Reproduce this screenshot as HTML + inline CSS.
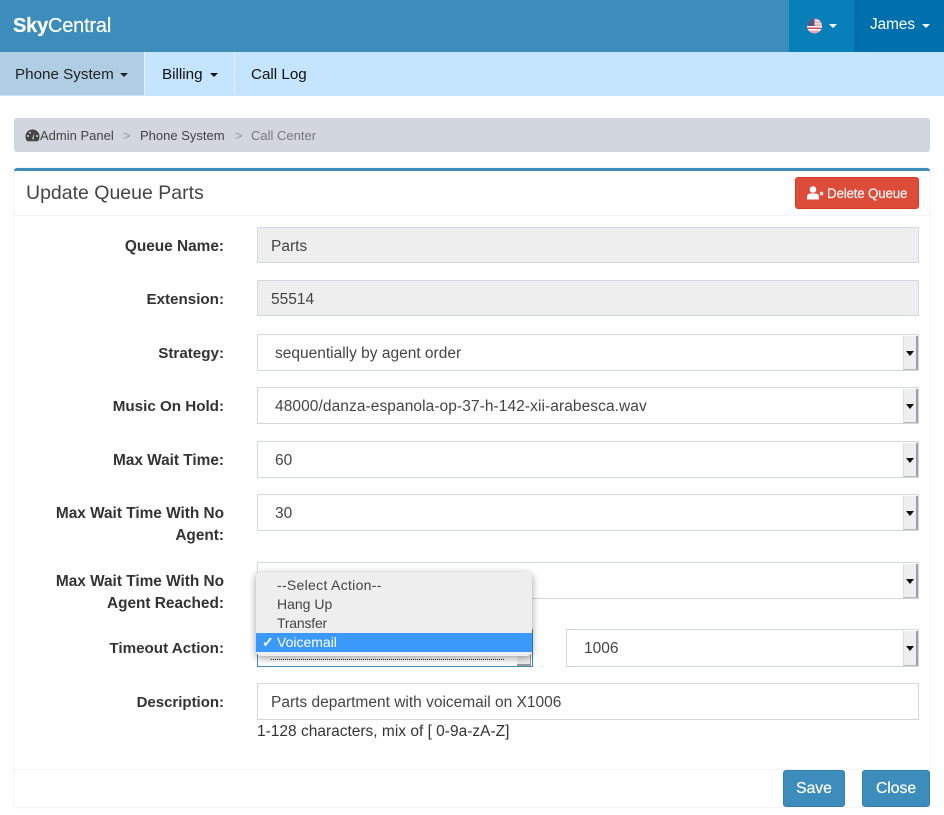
<!DOCTYPE html>
<html><head><meta charset="utf-8"><style>
*{box-sizing:border-box}
html,body{margin:0;padding:0;background:#fff}
body{width:944px;height:815px;position:relative;overflow:hidden;font-family:"Liberation Sans",sans-serif;font-size:14px;color:#444}
.a{position:absolute}
.t{position:absolute;white-space:nowrap;line-height:20px}
.caret{position:absolute;width:0;height:0;border-left:4px solid transparent;border-right:4px solid transparent;border-top:4px solid currentColor}
.lab{position:absolute;right:720px;font-weight:bold;color:#333;text-align:right;line-height:22px;font-size:15.4px;white-space:nowrap;letter-spacing:-.01px}
.f{position:absolute;border:1px solid #d2d6de;background:#fff;font-size:15.5px;color:#444;line-height:37px;padding-left:13px;left:257px;width:662px;height:37px;white-space:nowrap}
.f.dis{background:#eee;height:36px;padding-left:13px}
.s{padding-left:17px}
.arr{position:absolute;right:0;top:1px;bottom:0;width:15px;background:#eee;border-left:1px solid #ddd;border-right:2px solid #a0a0a0;border-bottom:1px solid #bbb}
.arr:after{content:"";position:absolute;left:2px;top:15px;border-left:4px solid transparent;border-right:4px solid transparent;border-top:5px solid #111}
.btn{position:absolute;background:#3c8dbc;border:1px solid #367fa9;border-radius:3px;color:#fff;text-align:center;font-size:15.7px;line-height:36px;-webkit-text-stroke:.2px #fff}
</style></head><body>
<div class="a" style="left:0;top:0;width:944px;height:52px;background:#3c8dbc"></div>
<div class="t" style="left:13px;top:15px;font-size:20px;line-height:22px;color:#fff;letter-spacing:-.2px;-webkit-text-stroke:.2px #fff"><b>Sky</b>Central</div>
<div class="a" style="left:789px;top:0;width:65px;height:52px;background:#0780ba"></div>
<div class="a" style="left:854px;top:0;width:90px;height:52px;background:#0070ac"></div>
<svg class="a" style="left:807px;top:18px" width="15" height="16" viewBox="0 0 15 16">
<defs><clipPath id="c"><circle cx="7.5" cy="8" r="7.5"/></clipPath></defs>
<g clip-path="url(#c)"><rect width="15" height="16" fill="#f0a5b0"/><rect y="2" width="15" height="1.5" fill="#f6dfe2"/><rect y="5" width="15" height="1.5" fill="#f6dfe2"/><rect y="8" width="15" height="1.5" fill="#fff"/><rect y="11" width="15" height="1.5" fill="#fff"/><rect y="9.5" width="15" height="1.5" fill="#d8475f"/><rect width="7.5" height="8" fill="#4e5a86"/></g></svg>
<div class="caret" style="left:829px;top:24px;color:#fff"></div>
<div class="t" style="left:870px;top:15px;color:#fff;font-size:15.3px">James</div>
<div class="caret" style="left:922px;top:24px;color:#fff"></div>

<div class="a" style="left:0;top:52px;width:944px;height:44px;background:#c5e4fd"></div>
<div class="a" style="left:0;top:52px;width:144px;height:43px;background:#b0cee3"></div>
<div class="a" style="left:144px;top:52px;width:1px;height:43px;background:#e6f0f8"></div>
<div class="a" style="left:234px;top:52px;width:1px;height:43px;background:#e6f0f8"></div>
<div class="t" style="left:15px;top:65px;color:#222;font-size:15.2px">Phone System</div>
<div class="caret" style="left:120px;top:73px;color:#222"></div>
<div class="t" style="left:162px;top:65px;color:#111;font-size:15.2px">Billing</div>
<div class="caret" style="left:210px;top:73px;color:#111"></div>
<div class="t" style="left:251px;top:65px;color:#111;font-size:15.2px">Call Log</div>

<div class="a" style="left:14px;top:118px;width:916px;height:34px;background:#d2d6de;border-radius:3px"></div>
<svg class="a" style="left:25px;top:129px" width="15" height="13" viewBox="0 0 15 13"><path d="M7.5 0.5A7 7 0 0 0 0.5 7.5c0 2 .6 3.6 1.6 4.8h10.8c1-1.200 1.600-2.800 1.600-4.800A7 7 0 0 0 7.500.5z" fill="#444"/><circle cx="3" cy="7" r="1" fill="#d2d6de"/><circle cx="5" cy="3.700" r="1" fill="#d2d6de"/><circle cx="12" cy="7" r="1" fill="#d2d6de"/><path d="M7 10L9.500 3.500L8.500 10.500z" fill="#d2d6de"/></svg>
<div class="t" style="left:40px;top:126px;font-size:13px;color:#444">Admin Panel</div>
<div class="t" style="left:123px;top:126px;font-size:13px;color:#999">&gt;</div>
<div class="t" style="left:140px;top:126px;font-size:13px;color:#444">Phone System</div>
<div class="t" style="left:235px;top:126px;font-size:13px;color:#999">&gt;</div>
<div class="t" style="left:251px;top:126px;font-size:13px;color:#777">Call Center</div>

<div class="a" style="left:14px;top:168px;width:916px;height:639px;background:#fff;border-top:3px solid #3c8dbc;border-radius:3px;box-shadow:0 0 2px rgba(0,0,0,.12)"></div>
<div class="a" style="left:14px;top:215px;width:916px;height:1px;background:#f4f4f4"></div>
<div class="a" style="left:14px;top:769px;width:916px;height:1px;background:#f4f4f4"></div>
<div class="t" style="left:26px;top:181px;font-size:19.5px;line-height:24px;color:#444">Update Queue Parts</div>
<div class="a" style="left:795px;top:177px;width:124px;height:32px;background:#dd4b39;border:1px solid #d73925;border-radius:3px"></div>
<svg class="a" style="left:807px;top:186px" width="17" height="14" viewBox="0 0 17 14"><circle cx="6" cy="3.500" r="3.300" fill="#fff"/><path d="M0 13.500V11c0-2.500 2-3.500 3.500-3.500h5C10 7.500 12 8.500 12 11v2.500z" fill="#fff"/><path d="M13 6l3 3M16 6l-3 3" stroke="#fff" stroke-width="1.300"/></svg>
<div class="t" style="left:827px;top:184px;font-size:13.400px;color:#fff;letter-spacing:-.2px;-webkit-text-stroke:.15px #fff">Delete Queue</div>

<div class="lab" style="top:236px">Queue Name:</div>
<div class="lab" style="top:289px;font-size:15.2px">Extension:</div>
<div class="lab" style="top:343px;font-size:15.2px">Strategy:</div>
<div class="lab" style="top:396px;font-size:15.2px">Music On Hold:</div>
<div class="lab" style="top:450px">Max Wait Time:</div>
<div class="lab" style="top:503px">Max Wait Time With No<br>Agent:</div>
<div class="lab" style="top:571px">Max Wait Time With No<br>Agent Reached:</div>
<div class="lab" style="top:638px;font-size:15.2px">Timeout Action:</div>
<div class="lab" style="top:692px;font-size:15px">Description:</div>

<div class="f dis" style="top:227px">Parts</div>
<div class="f dis" style="top:280px">55514</div>
<div class="f s" style="top:334px">sequentially by agent order<div class="arr"></div></div>
<div class="f s" style="top:387px;letter-spacing:.08px">48000/danza-espanola-op-37-h-142-xii-arabesca.wav<div class="arr"></div></div>
<div class="f s" style="top:441px">60<div class="arr"></div></div>
<div class="f s" style="top:494px">30<div class="arr"></div></div>
<div class="f s" style="top:562px"><div class="arr"></div></div>
<div class="f" style="top:629px;width:276px;height:38px;border-color:#3c8dbc"><div class="a" style="left:13px;right:28px;top:29px;border-top:1px dotted #333"></div><div class="a" style="right:1px;top:20px;width:14px;height:16px;background:#eee;border-right:1px solid #999;border-bottom:2px solid #999"></div></div>
<div class="f s" style="top:629px;left:566px;width:353px;height:38px">1006<div class="arr"></div></div>
<div class="f" style="top:683px">Parts department with voicemail on X1006</div>
<div class="t" style="left:257px;top:722px;font-size:15.500px;color:#333">1-128 characters, mix of [ 0-9a-zA-Z]</div>

<div class="a" style="left:256px;top:572px;width:276px;height:84px;background:#eee;border-radius:5px;box-shadow:0 2px 8px rgba(0,0,0,.4);font-size:14px;color:#444">
<div class="t" style="left:21px;top:3px;letter-spacing:.3px">--Select Action--</div>
<div class="t" style="left:21px;top:22px">Hang Up</div>
<div class="t" style="left:21px;top:41px;letter-spacing:-.2px">Transfer</div>
<div class="a" style="left:0;top:61px;width:276px;height:19px;background:#3b99fc"></div>
<div class="t" style="left:6px;top:60px;color:#fff;font-weight:bold">✓</div>
<div class="t" style="left:21px;top:60px;color:#fff">Voicemail</div>
</div>

<div class="btn" style="left:783px;top:770px;width:62px;height:37px">Save</div>
<div class="btn" style="left:862px;top:770px;width:68px;height:37px">Close</div>
</body></html>
